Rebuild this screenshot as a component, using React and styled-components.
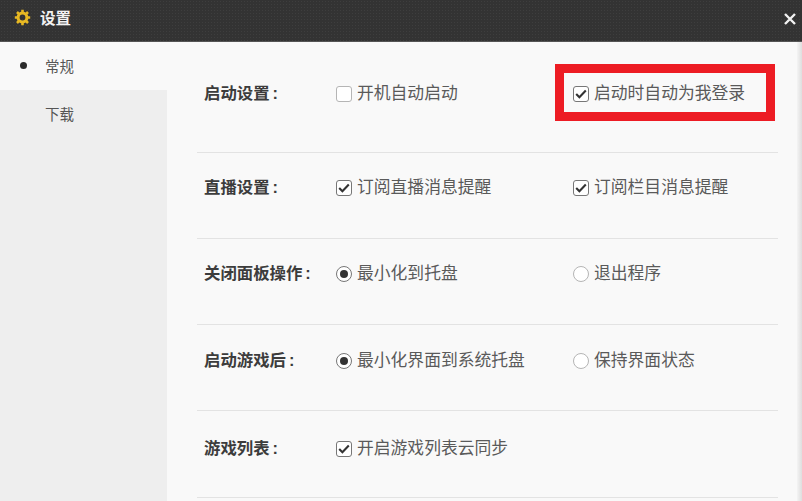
import React from "react";
import styled, { createGlobalStyle } from "styled-components";

const Global = createGlobalStyle`
  html, body { margin: 0; padding: 0; background: #f9f9f9; }
  body { font-family: "Liberation Sans", "Noto Sans CJK SC", sans-serif; overflow: hidden; }
`;

const Windowed = styled.div`
  position: relative;
  width: 802px;
  height: 501px;
  overflow: hidden;
  display: flex;
  flex-direction: column;
  background: #f9f9f9;
`;

const TitleBar = styled.header`
  flex: none;
  height: 42px;
  box-sizing: border-box;
  display: flex;
  align-items: center;
  padding: 0 5px 6px 14px;
  color: #f2f2f2;
  font-size: 15.5px;
  font-weight: 700;
  background-color: #333333;
  background-image: radial-gradient(#3e3e3e 0.7px, transparent 0.8px);
  background-size: 3px 3px;
  border-bottom: 1px solid #555;
`;

const Title = styled.span`
  margin: -1px 0 0 9px;
  flex: 1;
`;

const CloseWrap = styled.span`
  display: flex;
  margin-top: 3px;
`;

const Body = styled.div`
  flex: 1;
  display: flex;
  min-height: 0;
`;

const Sidebar = styled.nav`
  flex: none;
  width: 167px;
  background: #eeeeee;
`;

const NavItem = styled.div`
  height: 48px;
  display: flex;
  align-items: center;
  padding: 0 0 2px 20px;
  box-sizing: border-box;
  font-size: 14.5px;
  color: #555;
  background: ${(p) => (p.$active ? "#f9f9f9" : "transparent")};
`;

const Dot = styled.i`
  width: 7px;
  height: 7px;
  border-radius: 50%;
  background: ${(p) => (p.$show ? "#2b2b2b" : "transparent")};
  margin-right: 18px;
`;

const Content = styled.main`
  flex: 1;
  padding: 24px 24px 0 30px;
  min-width: 0;
`;

const Row = styled.section`
  height: 86px;
  box-sizing: border-box;
  border-bottom: 1px solid #e3e3e3;
  display: grid;
  grid-template-columns: 132px 237px 1fr;
  align-items: start;
  padding: 24px 0 0 7px;
  &:first-child {
    height: 87px;
    padding-top: 17px;
  }
  &:nth-child(4) {
    padding-top: 25px;
  }
  &:last-child {
    height: 87px;
    padding-top: 27px;
  }
`;

const Label = styled.div`
  font-size: 16.4px;
  font-weight: 700;
  color: #3c3c3c;
  line-height: 20px;
  white-space: nowrap;
  &::after {
    content: ":";
    margin-left: 3px;
  }
`;

const Option = styled.label`
  display: flex;
  align-items: center;
  gap: 5px;
  margin-top: 1px;
  font-size: 16.8px;
  line-height: 20px;
  color: #5a5a5a;
  white-space: nowrap;
`;

const CheckBox = styled.span`
  flex: none;
  width: 16px;
  height: 16px;
  box-sizing: border-box;
  border: 1px solid ${(p) => (p.$on ? "#777" : "#b5b5b5")};
  border-radius: 3px;
  background: #fff;
  display: flex;
  align-items: center;
  justify-content: center;
`;

const RadioMark = styled.span`
  flex: none;
  width: 16px;
  height: 16px;
  box-sizing: border-box;
  border: 1px solid ${(p) => (p.$on ? "#777" : "#b5b5b5")};
  border-radius: 50%;
  background: #fff;
  display: flex;
  align-items: center;
  justify-content: center;
  &::after {
    content: "";
    width: 8px;
    height: 8px;
    border-radius: 50%;
    background: ${(p) => (p.$on ? "#333" : "transparent")};
  }
`;

const EdgeBar = styled.div`
  position: absolute;
  top: 42px;
  right: 0;
  bottom: 0;
  width: 5px;
  background: linear-gradient(90deg, #f4f4f4, #dedede);
`;

const Highlight = styled.div`
  position: absolute;
  left: 555px;
  top: 64px;
  width: 220px;
  height: 57px;
  box-sizing: border-box;
  border: 9px solid #ed1c24;
`;

const Gear = () => (
  <svg width="17" height="17" viewBox="0 0 17 17" aria-hidden="true">
    <circle cx="8.5" cy="8.5" r="4.4" fill="none" stroke="#e8b923" strokeWidth="3" />
    <g stroke="#e8b923" strokeWidth="2.6" strokeLinecap="butt">
      <path d="M8.5 0.8v2.4M8.5 13.8v2.4M0.8 8.5h2.4M13.8 8.5h2.4M3 3l1.8 1.8M12.2 12.2L14 14M3 14l1.8-1.8M12.2 4.8L14 3" />
    </g>
  </svg>
);

const Close = () => (
  <svg width="14" height="14" viewBox="0 0 14 14" aria-hidden="true">
    <path d="M2 2l10 10M12 2L2 12" stroke="#f2f2f2" strokeWidth="2.4" fill="none" />
  </svg>
);

const Tick = () => (
  <svg width="14" height="14" viewBox="0 0 14 14" aria-hidden="true">
    <path d="M2.2 7l3.2 3.2L11.8 3.6" stroke="#333" strokeWidth="2.1" fill="none" />
  </svg>
);

const Check = ({ on, children }) => (
  <Option>
    <CheckBox $on={on}>{on && <Tick />}</CheckBox>
    {children}
  </Option>
);

const Radio = ({ on, children }) => (
  <Option>
    <RadioMark $on={on} />
    {children}
  </Option>
);

export default function App() {
  return (
    <Windowed>
      <Global />
      <TitleBar>
        <Gear />
        <Title>设置</Title>
        <CloseWrap>
          <Close />
        </CloseWrap>
      </TitleBar>
      <Body>
        <Sidebar>
          <NavItem $active>
            <Dot $show />
            常规
          </NavItem>
          <NavItem>
            <Dot />
            下载
          </NavItem>
        </Sidebar>
        <Content>
          <Row>
            <Label>启动设置</Label>
            <Check>开机自动启动</Check>
            <Check on>启动时自动为我登录</Check>
          </Row>
          <Row>
            <Label>直播设置</Label>
            <Check on>订阅直播消息提醒</Check>
            <Check on>订阅栏目消息提醒</Check>
          </Row>
          <Row>
            <Label>关闭面板操作</Label>
            <Radio on>最小化到托盘</Radio>
            <Radio>退出程序</Radio>
          </Row>
          <Row>
            <Label>启动游戏后</Label>
            <Radio on>最小化界面到系统托盘</Radio>
            <Radio>保持界面状态</Radio>
          </Row>
          <Row>
            <Label>游戏列表</Label>
            <Check on>开启游戏列表云同步</Check>
          </Row>
        </Content>
      </Body>
      <EdgeBar />
      <Highlight />
    </Windowed>
  );
}
